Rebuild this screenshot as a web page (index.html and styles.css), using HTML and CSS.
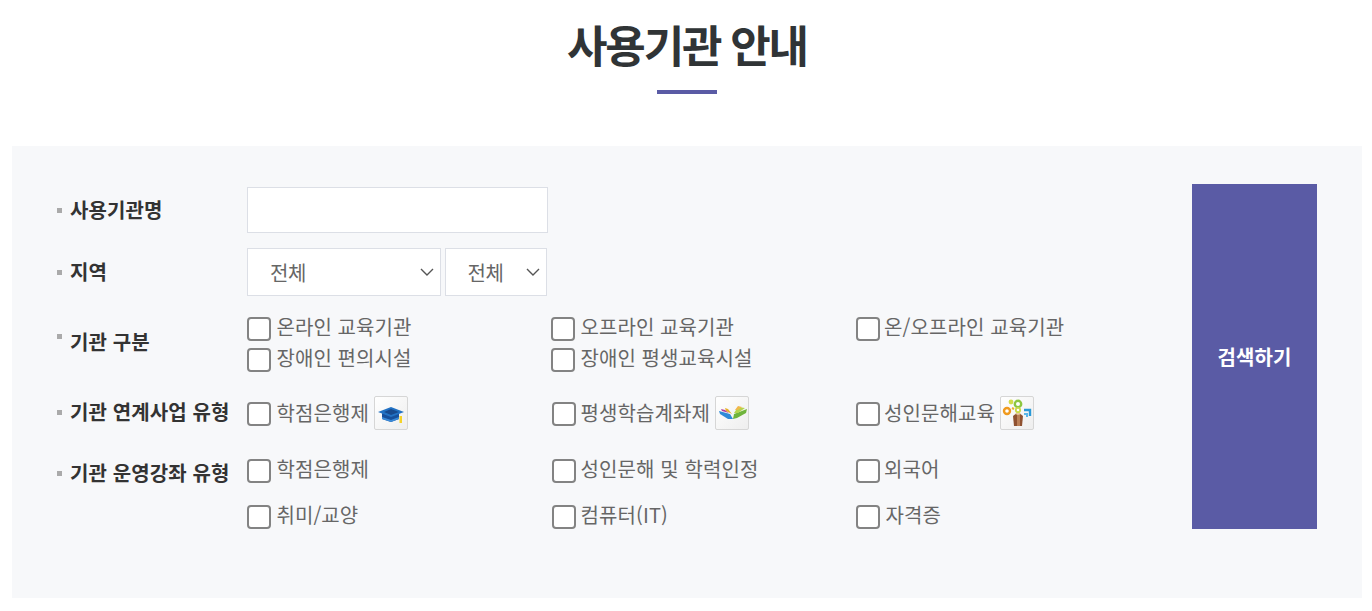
FILE: index.html
```html
<!DOCTYPE html>
<html lang="ko">
<head>
<meta charset="utf-8">
<title>사용기관 안내</title>
<link rel="stylesheet" href="styles.css">
</head>
<body>
<header class="head">
  <h1 class="title">사용기관 안내</h1>
  <div class="title-bar"></div>
</header>
<section class="panel">
  <form class="form">
    <div class="fields">
      <div class="row row-name">
        <div class="label">사용기관명</div>
        <div class="ctrl"><input class="text" type="text"></div>
      </div>
      <div class="row row-region">
        <div class="label">지역</div>
        <div class="ctrl selects">
          <div class="select wide"><span>전체</span><svg class="chev" viewBox="0 0 14 8"><path d="M1 1l6 6 6-6" fill="none" stroke="#555" stroke-width="1.4"/></svg></div>
          <div class="select narrow"><span>전체</span><svg class="chev" viewBox="0 0 14 8"><path d="M1 1l6 6 6-6" fill="none" stroke="#555" stroke-width="1.4"/></svg></div>
        </div>
      </div>
      <div class="row row-kind">
        <div class="label label-high">기관 구분</div>
        <div class="ctrl grid tight">
          <label class="chk"><i class="box"></i>온라인 교육기관</label>
          <label class="chk"><i class="box"></i>오프라인 교육기관</label>
          <label class="chk"><i class="box"></i>온/오프라인 교육기관</label>
          <label class="chk"><i class="box"></i>장애인 편의시설</label>
          <label class="chk"><i class="box"></i>장애인 평생교육시설</label>
        </div>
      </div>
      <div class="row row-biz">
        <div class="label">기관 연계사업 유형</div>
        <div class="ctrl grid wide-cols">
          <label class="chk"><i class="box"></i>학점은행제
            <span class="badge"><svg viewBox="0 0 34 34"><path d="M8 17v6l9 3 8-3v-6l-8 3z" fill="#17509c"/><path d="M4 16l13-5 13 5-13 5z" fill="#2272c4"/><path d="M10 16l7-3 8 3-8 3z" fill="#174a8f"/><path d="M8 21l9 3 8-3v2l-8 3-9-3z" fill="#3a8ad8"/><rect x="25.500" y="20" width="2.500" height="7" fill="#f5d327"/></svg></span></label>
          <label class="chk"><i class="box"></i>평생학습계좌제
            <span class="badge"><svg viewBox="0 0 34 34"><path d="M4 15l11 3 3 5h-5l-8-5z" fill="#2f8ad8"/><path d="M6 13l4 1 4 3-7-2z" fill="#b03c9c"/><path d="M10 12l3 1 4 5-6-3z" fill="#e8b02a"/><path d="M18 23l1-5 13-5-1 4-9 5z" fill="#6fb43c"/><path d="M19 17l4-6 7 1-7 5z" fill="#b4d44a"/><path d="M20 14l3-4 4 1-4 3z" fill="#f0b84a"/></svg></span></label>
          <label class="chk"><i class="box"></i>성인문해교육
            <span class="badge"><svg viewBox="0 0 34 34"><path d="M13 20l5-4 5 4-1 10h-8z" fill="#8f5130"/><path d="M17 17h3v13h-3z" fill="#bb8058"/><path d="M15 18l3-2 3 2-3 1z" fill="#e8c8a0"/><circle cx="18" cy="8" r="3.200" fill="#fff" stroke="#8cc63f" stroke-width="2.400"/><circle cx="11" cy="6" r="2.400" fill="#d2dc4a"/><circle cx="7" cy="15" r="3" fill="#fff" stroke="#f09a1e" stroke-width="2.400"/><circle cx="18" cy="14" r="2.200" fill="#fff" stroke="#c9d94a" stroke-width="1.800"/><path d="M24 14h6v6" fill="none" stroke="#2a9ad8" stroke-width="2.400"/><path d="M24 18h3v3" fill="none" stroke="#5ab6e8" stroke-width="2"/><path d="M12 12l2 1" stroke="#e8b02a" stroke-width="2"/></svg></span></label>
        </div>
      </div>
      <div class="row row-course">
        <div class="label">기관 운영강좌 유형</div>
        <div class="ctrl grid loose wide-cols">
          <label class="chk"><i class="box"></i>학점은행제</label>
          <label class="chk"><i class="box"></i>성인문해 및 학력인정</label>
          <label class="chk"><i class="box"></i>외국어</label>
          <label class="chk"><i class="box"></i>취미/교양</label>
          <label class="chk"><i class="box"></i>컴퓨터(IT)</label>
          <label class="chk"><i class="box"></i>자격증</label>
        </div>
      </div>
    </div>
    <button class="search" type="button">검색하기</button>
  </form>
</section>
</body>
</html>
```
FILE: styles.css
```css
* { box-sizing: border-box; }
html, body { margin: 0; padding: 0; background: #fff; }
body {
  width: 1372px;
  height: 611px;
  overflow: hidden;
  font-family: "Noto Sans CJK KR", "Noto Sans", sans-serif;
  color: #666;
}
.head { display: flex; flex-direction: column; align-items: center; padding: 11px 0 0 2px; height: 146px; }
.title {
  margin: 0;
  font-size: 44px;
  line-height: 66px;
  font-weight: 700;
  letter-spacing: -2.2px;
  color: #303436;
}
.title-bar { width: 60px; height: 4px; margin-top: 13px; background: #5a5ba5; }
.panel { margin: 0 10px 0 12px; height: 452px; background: #f7f8fa; }
.form { display: flex; justify-content: space-between; padding: 38px 45px 0; }
.fields { width: 1100px; padding-top: 3px; }
.row { display: flex; align-items: center; }
.row-name { height: 46px; }
.row-region { height: 48px; margin-top: 15px; }
.row-kind { height: 62px; margin-top: 15px; }
.row-biz { height: 34px; margin-top: 23px; }
.row-course { height: 92px; margin-top: 27px; align-items: flex-start; }
.label {
  flex: 0 0 190px;
  position: relative;
  padding-left: 13px;
  font-size: 20px;
  line-height: 30px;
  font-weight: 700;
  letter-spacing: 0.1px;
  color: #333;
  white-space: nowrap;
}
.label::before {
  content: "";
  position: absolute;
  left: 0;
  top: 13px;
  width: 5px;
  height: 5px;
  background: #aaa;
}
.label-high::before { top: 7px; }
.row-biz .label { margin-bottom: 2px; }
.row-course .label { margin-top: 1px; }
.ctrl { flex: 1; }
.text { display: block; width: 301px; height: 46px; background: #fff; border: 1px solid #dcdfe6; }
.selects { display: flex; gap: 4px; }
.select {
  display: flex;
  align-items: center;
  justify-content: space-between;
  height: 48px;
  background: #fff;
  border: 1px solid #dcdfe6;
  font-size: 20px;
  letter-spacing: -0.4px;
  color: #666;
}
.wide { width: 194px; padding: 0 6px 0 22px; }
.narrow { width: 102px; padding: 0 6px 0 21.5px; }
.chev { width: 14px; height: 8px; }
.grid { display: grid; grid-template-columns: 304px 305px 304px; align-items: center; }
.wide-cols { grid-template-columns: 305px 304px 304px; }
.tight { grid-auto-rows: 31px; }
.loose { grid-auto-rows: 24px; row-gap: 22px; }
.chk {
  display: flex;
  align-items: center;
  font-size: 20px;
  line-height: 26px;
  letter-spacing: 0.1px;
  color: #666;
  white-space: nowrap;
}
.box {
  flex: 0 0 24px;
  width: 24px;
  height: 24px;
  margin: 4px 5.4px 0 0;
  background: #fff;
  border: 2px solid #838383;
  border-radius: 4px;
}
.chk:nth-child(3) .box { margin-right: 4px; }
.wide-cols .chk:nth-child(3n+2) .box { margin-right: 4.6px; }
.row-biz .box { margin-top: 2px; }
.badge {
  display: block;
  width: 34px;
  height: 34px;
  margin-left: 5px;
  background: linear-gradient(135deg, #fff, #eee);
  border: 1px solid #d6d6d6;
  border-radius: 2px;
}
.badge svg { display: block; width: 34px; height: 34px; margin: -1px; }
.search {
  width: 125px;
  height: 345px;
  border: 0;
  background: #5a5ba5;
  color: #fff;
  font-family: inherit;
  font-size: 20px;
  font-weight: 700;
  letter-spacing: 0.1px;
}
```
